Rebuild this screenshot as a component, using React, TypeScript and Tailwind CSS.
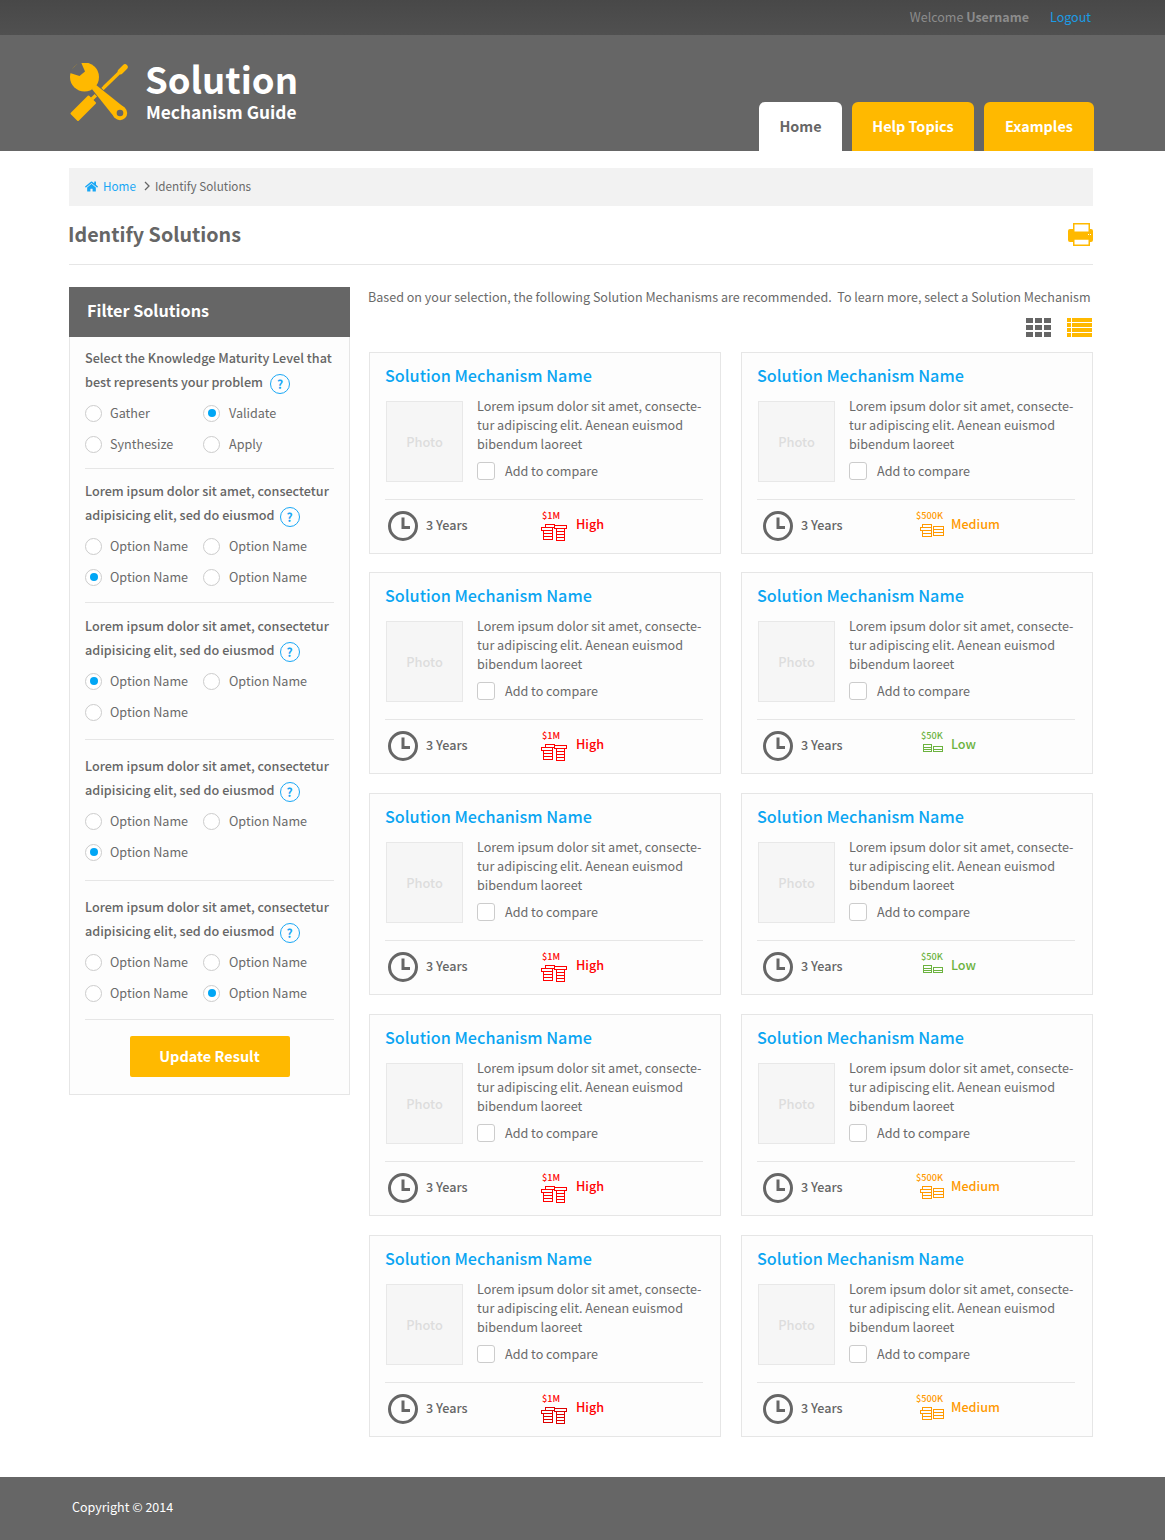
import { FaHome } from "react-icons/fa";

const AMBER = "#ffb900";

function Logo() {
  return (
    <svg width="60" height="60" viewBox="0 0 60 60" className="shrink-0 ml-[1px]">
      <polygon points="1.5,50.5 8,57 25,40 18.5,33.5" fill={AMBER} stroke={AMBER} strokeWidth="2" strokeLinejoin="round" />
      <path d="M22 36 L53 6" stroke={AMBER} strokeWidth="3.4" />
      <path d="M50.5 8.5 L55 4" stroke={AMBER} strokeWidth="5.5" strokeLinecap="round" />
      <path d="M26 22 L30 26 M24 24 L52 52" stroke="#666666" strokeWidth="9" />
      <circle cx="14.5" cy="14" r="14.5" fill={AMBER} />
      <polygon points="26.1,21.9 55,45 45,55 21.9,26.1" fill={AMBER} />
      <circle cx="50" cy="50" r="7.2" fill={AMBER} />
      <polygon points="10.5,-2 15,8.5 9.5,13 -2,9.5" fill="#666666" />
      <circle cx="50" cy="50" r="3.3" fill="#666666" />
    </svg>
  );
}

function PrinterIcon() {
  return (
    <svg width="25" height="23" viewBox="0 0 25 23" className="mb-[2px]">
      <rect x="0" y="6" width="25" height="13" rx="2" fill={AMBER} />
      <rect x="5.75" y="0.75" width="15.5" height="9.5" fill="#ffffff" stroke={AMBER} strokeWidth="1.5" />
      <rect x="0" y="8.5" width="25" height="6.5" rx="1" fill={AMBER} />
      <rect x="5.75" y="16" width="15.5" height="6.25" fill="#ffffff" stroke={AMBER} strokeWidth="1.5" />
      <rect x="20" y="11" width="1" height="1" fill="#ffffff" />
      <rect x="22" y="11" width="1" height="1" fill="#ffffff" />
    </svg>
  );
}

function GridIcon() {
  const xs = [0, 9, 18];
  const ys = [0, 7, 14];
  return (
    <svg width="25" height="19" viewBox="0 0 25 19">
      {ys.map((y) => xs.map((x) => <rect key={`${x}-${y}`} x={x} y={y} width="7" height="5" fill="#666666" />))}
    </svg>
  );
}

function ListIcon() {
  const ys = [0, 5, 10, 15];
  return (
    <svg width="25" height="19" viewBox="0 0 25 19">
      {ys.map((y) => (
        <g key={y}>
          <rect x="0" y={y} width="4" height="4" fill={AMBER} />
          <rect x="5" y={y} width="20" height="4" fill={AMBER} />
        </g>
      ))}
    </svg>
  );
}

function ClockIcon() {
  return (
    <svg width="30" height="30" viewBox="0 0 30 30" className="shrink-0">
      <circle cx="15" cy="15" r="13.5" fill="none" stroke="#666666" strokeWidth="3" />
      <path d="M15 6.5 V16.5 H22" fill="none" stroke="#666666" strokeWidth="3" />
    </svg>
  );
}

function HighCoins({ color = "#ff0000" }: { color?: string }) {
  const bars = [
    [4.5, 0.5, 9],
    [0.5, 3.5, 11],
    [2.5, 6.5, 9],
    [2.5, 9.5, 9],
    [2.5, 12.5, 9],
    [13.5, 1.5, 12],
    [15.5, 4.5, 8],
    [15.5, 7.5, 8],
    [15.5, 10.5, 8],
    [15.5, 13.5, 8],
  ];
  return (
    <svg width="27" height="17" viewBox="0 0 27 17" shapeRendering="crispEdges">
      {bars.map(([x, y, w]) => (
        <rect key={`${x}-${y}`} x={x} y={y} width={w} height="3" fill="none" stroke={color} />
      ))}
    </svg>
  );
}

function MediumCoins() {
  const c = "#ff9900";
  const bars = [
    [2.5, 0.5, 9],
    [0.5, 3.5, 11],
    [2.5, 6.5, 9],
    [2.5, 9.5, 9],
    [13.5, 2.5, 10],
    [13.5, 5.5, 10],
    [13.5, 8.5, 10],
  ];
  return (
    <svg width="24" height="14" viewBox="0 0 24 14" shapeRendering="crispEdges">
      {bars.map(([x, y, w]) => (
        <rect key={`${x}-${y}`} x={x} y={y} width={w} height="3" fill="none" stroke={c} />
      ))}
    </svg>
  );
}

function LowCoins() {
  const c = "#6cb33f";
  return (
    <svg width="20" height="8" viewBox="0 0 20 8" shapeRendering="crispEdges">
      <rect x="0.5" y="0.5" width="8" height="7" fill="none" stroke={c} />
      <path d="M1 3 H8 M1 5 H8" stroke={c} />
      <rect x="10.5" y="2.5" width="9" height="5" fill="none" stroke={c} />
      <path d="M11 5 H19" stroke={c} />
    </svg>
  );
}

function Radio({ label, checked, second }: { label: string; checked?: boolean; second?: boolean }) {
  return (
    <div className="flex items-center h-[31px] w-[118px]">
      <span className="w-[17px] h-[17px] mt-[1px] rounded-full border border-[#cccccc] bg-white flex items-center justify-center shrink-0">
        {checked && <span className="w-2 h-2 rounded-full bg-[#00a6f5]" />}
      </span>
      <span className={`${second ? "ml-[9px]" : "ml-[8px]"} text-[12.6px] leading-[20px] text-[#6a6a6a]`}>{label}</span>
    </div>
  );
}

function Help({ first }: { first: boolean }) {
  return (
    <span className={`inline-flex align-middle items-center justify-center w-[20px] h-[20px] ${first ? "ml-[7px]" : "ml-[5px]"} rounded-full border-[1.5px] border-[#19a7f5] text-[#19a7f5] text-[12px] leading-none font-bold`}>
      ?
    </span>
  );
}

const sections = [
  {
    cls: "pt-0 pb-[9px] border-b border-[#e6e6e6]",
    l1: "Select the Knowledge Maturity Level that",
    l2: "best represents your problem",
    options: [["Gather"], ["Validate", 1], ["Synthesize"], ["Apply"]],
  },
  {
    cls: "pt-[10px] pb-[10px] border-b border-[#e6e6e6]",
    l1: "Lorem ipsum dolor sit amet, consectetur",
    l2: "adipisicing elit, sed do eiusmod",
    options: [["Option Name"], ["Option Name"], ["Option Name", 1], ["Option Name"]],
  },
  {
    cls: "pt-[11px] pb-[12px] border-b border-[#e6e6e6]",
    l1: "Lorem ipsum dolor sit amet, consectetur",
    l2: "adipisicing elit, sed do eiusmod",
    options: [["Option Name", 1], ["Option Name"], ["Option Name"]],
  },
  {
    cls: "pt-[14px] pb-[13px] border-b border-[#e6e6e6]",
    l1: "Lorem ipsum dolor sit amet, consectetur",
    l2: "adipisicing elit, sed do eiusmod",
    options: [["Option Name"], ["Option Name"], ["Option Name", 1]],
  },
  {
    cls: "pt-[14px] pb-[11px] border-b border-[#e6e6e6]",
    l1: "Lorem ipsum dolor sit amet, consectetur",
    l2: "adipisicing elit, sed do eiusmod",
    options: [["Option Name"], ["Option Name"], ["Option Name"], ["Option Name", 1]],
  },
];

function Sidebar() {
  return (
    <aside className="w-[281px] shrink-0">
      <div className="h-[50px] bg-[#666666] flex items-center pl-[18px] pb-[4px] text-white text-[16.2px] font-semibold">
        Filter Solutions
      </div>
      <div className="border border-t-0 border-[#e6e6e6] bg-[#fdfdfd] px-[15px] pt-[9px] pb-[17px]">
        {sections.map((s, i) => (
          <div key={i} className={s.cls}>
            <div className="text-[12.65px] leading-[24px] font-medium text-[#666666] whitespace-nowrap">
              <div>{s.l1}</div>
              <div>
                {s.l2}
                <Help first={i === 0} />
              </div>
            </div>
            <div className="flex flex-wrap mt-[3px]">
              {s.options.map(([label, checked], j) => (
                <Radio key={j} label={label as string} checked={!!checked} second={j % 2 === 1} />
              ))}
            </div>
          </div>
        ))}
        <div className="flex justify-center mt-[16px]">
          <button className="w-[160px] h-[41px] pb-[1px] bg-[#ffb900] rounded-[2px] text-white text-[14.5px] font-semibold">
            Update Result
          </button>
        </div>
      </div>
    </aside>
  );
}

type Level = "high" | "high2" | "medium" | "low";

function Cost({ level }: { level: Level }) {
  const high = level === "high" || level === "high2";
  const color = high ? "text-[#ff0000]" : level === "medium" ? "text-[#ff9900]" : "text-[#6cb33f]";
  const amount = high ? "$1M" : level === "medium" ? "$500K" : "$50K";
  const label = high ? "High" : level === "medium" ? "Medium" : "Low";
  const amountCls = high ? "ml-[1px]" : level === "medium" ? "ml-0" : "ml-[5px]";
  const coinCls = high ? "ml-0" : level === "medium" ? "ml-[4px]" : "ml-[7px]";
  return (
    <div className="flex items-center -mt-[1px]">
      <div className={`w-[27px] flex flex-col items-start ${color}`}>
        <span className={`${amountCls} text-[9.2px] leading-[12px] font-medium whitespace-nowrap`}>{amount}</span>
        <div className={`${coinCls} h-[17px] flex items-start mt-[3px]`}>
          {level === "high" && <HighCoins />}
          {level === "high2" && <HighCoins color="#dd0000" />}
          {level === "medium" && <MediumCoins />}
          {level === "low" && <LowCoins />}
        </div>
      </div>
      <span className={`ml-[8px] -mt-[3px] text-[12.6px] leading-[20px] font-medium ${color}`}>{label}</span>
    </div>
  );
}

function Card({ level, right, rowCls }: { level: Level; right?: boolean; rowCls: string }) {
  return (
    <div className={`w-[352px] h-[202px] border border-[#e6e6e6] bg-[#fdfdfd] pl-[15px] pr-[17px] pt-[9px] ${rowCls}`}>
      <h3 className="text-[16.2px] leading-[26px] font-medium text-[#0aa5f2]">Solution Mechanism Name</h3>
      <div className="flex mt-[13px] h-[98px]">
        <div className="w-[77px] h-[81px] ml-[1px] shrink-0 bg-[#f6f6f6] border border-[#e8e8e8] flex items-center justify-center text-[12.8px] font-medium text-[#dddddd]">
          Photo
        </div>
        <div className="ml-[14px]">
          <p className="text-[12.6px] leading-[19px] text-[#6a6a6a] -mt-[5px] whitespace-nowrap">
            Lorem ipsum dolor sit amet, consecte-
            <br />
            tur adipiscing elit. Aenean euismod
            <br />
            bibendum laoreet
          </p>
          <div className="flex items-center mt-[8px]">
            <span className="w-[18px] h-[18px] rounded-[3px] border border-[#cccccc] bg-white" />
            <span className="ml-[10px] text-[12.6px] leading-[20px] text-[#6a6a6a]">Add to compare</span>
          </div>
        </div>
      </div>
      <div className="border-t border-[#e6e6e6] flex items-center h-[52px]">
        <div className={right ? "flex items-center ml-[6px] w-[153px]" : "flex items-center ml-[3px] w-[153px]"}>
          <ClockIcon />
          <span className="ml-[8px] text-[12.6px] leading-[20px] -mt-[2px] font-medium text-[#666666]">3 Years</span>
        </div>
        <Cost level={level} />
      </div>
    </div>
  );
}

const rows: { l: Level; r: Level; cls: string }[] = [
  { l: "high", r: "medium", cls: "mb-[18px]" },
  { l: "high", r: "low", cls: "mb-[19px]" },
  { l: "high", r: "low", cls: "mb-[19px]" },
  { l: "high", r: "medium", cls: "mb-[19px]" },
  { l: "high2", r: "medium", cls: "mb-0" },
];

export default function App() {
  return (
    <div className="w-[1165px] bg-white [font-family:'Noto_Sans_CJK_SC','Noto_Sans',sans-serif]">
      <div className="h-[35px] pb-[1px] bg-gradient-to-b from-[#484848] to-[#505050] flex items-center justify-end pr-[74px] text-[12.5px]">
        <span className="text-[#8c8c8c]">
          Welcome <b className="font-bold">Username</b>
        </span>
        <span className="ml-[21px] text-[#1b9ce6]">Logout</span>
      </div>

      <header className="h-[116px] bg-[#666666] relative flex items-end pl-[69px] pr-[71px] justify-between">
        <div className="flex self-start mt-[28px]">
          <Logo />
          <div className="ml-[15px] text-white font-bold">
            <div className="text-[36.5px] leading-[38px] -mt-[3px]">Solution</div>
            <div className="text-[17.3px] leading-[26px] mt-[1px] ml-[1px]">Mechanism Guide</div>
          </div>
        </div>
        <nav className="flex gap-[10px] text-[14.4px] font-semibold">
          <div className="w-[83px] h-[49px] pb-[2px] rounded-t-[6px] bg-white text-[#666666] flex items-center justify-center">Home</div>
          <div className="w-[122px] h-[49px] pb-[2px] rounded-t-[6px] bg-[#ffb900] text-white flex items-center justify-center">Help Topics</div>
          <div className="w-[110px] h-[49px] pb-[2px] rounded-t-[6px] bg-[#ffb900] text-white flex items-center justify-center">Examples</div>
        </nav>
      </header>

      <main className="w-[1024px] ml-[69px] pt-[17px]">
        <div className="h-[38px] pb-[3px] bg-[#f2f2f2] flex items-center pl-[16px] text-[11.7px]">
          <FaHome className="text-[#19a7f5] w-[13px] h-[13px] mt-[1px]" />
          <span className="ml-[5px] text-[#19a7f5]">Home</span>
          <svg width="8" height="10" viewBox="0 0 8 10" className="ml-[7px] mt-[1px]">
            <path d="M2 1 L6 5 L2 9" fill="none" stroke="#666666" strokeWidth="1.3" />
          </svg>
          <span className="ml-[4px] text-[#6a6a6a]">Identify Solutions</span>
        </div>

        <div className="h-[59px] border-b border-[#e6e6e6] flex items-center justify-between">
          <h1 className="-ml-[1px] pb-[2px] text-[19.7px] font-bold text-[#666666]">Identify Solutions</h1>
          <PrinterIcon />
        </div>

        <div className="flex mt-[22px]">
          <Sidebar />
          <section className="ml-[18px] flex-1 min-w-0">
            <p className="text-[12.55px] leading-[20px] text-[#6a6a6a] whitespace-nowrap">
              Based on your selection, the following Solution Mechanisms are recommended.{"\u00a0 "}To learn more, select a Solution Mechanism
            </p>
            <div className="flex justify-end gap-[16px] mt-[11px] mb-[15px] pr-[1px]">
              <GridIcon />
              <ListIcon />
            </div>
            <div className="ml-[1px]">
              {rows.map((r, i) => (
                <div key={i} className="flex justify-between">
                  <Card level={r.l} rowCls={r.cls} />
                  <Card level={r.r} right rowCls={r.cls} />
                </div>
              ))}
            </div>
          </section>
        </div>
      </main>

      <footer className="mt-[40px] h-[63px] pb-[2px] bg-[#666666] flex items-center pl-[72px] text-[12.5px] text-white">
        Copyright © 2014
      </footer>
    </div>
  );
}
